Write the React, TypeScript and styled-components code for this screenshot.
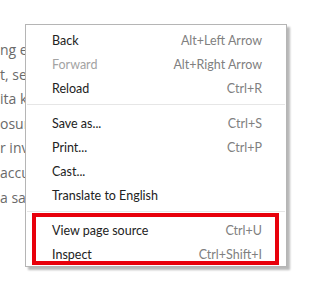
import styled, { createGlobalStyle } from "styled-components";

const GlobalStyle = createGlobalStyle`
    html, body {
        margin: 0;
        padding: 0;
        background: #ffffff;
    }
`;

const Page = styled.div`
    position: relative;
    width: 317px;
    height: 296px;
    overflow: hidden;
    background: #ffffff;
`;

const Article = styled.div`
    display: flex;
    flex-direction: column;
    padding-top: 38px;
    font-family: "Open Sans", sans-serif;
    font-size: 14px;
    line-height: 24.6px;
    color: #6a6a6a;
    white-space: nowrap;
`;

const Menu = styled.div`
    position: absolute;
    left: 25px;
    top: 24px;
    width: 260px;
    display: flex;
    flex-direction: column;
    padding: 3px 0 0;
    background: #ffffff;
    border: 1px solid #b5b5b5;
    box-shadow: 3px 3px 2px rgba(0, 0, 0, 0.28);
    font-family: Lato, sans-serif;
    font-size: 12.5px;
`;

const Row = styled.div<{ $disabled?: boolean }>`
    display: flex;
    align-items: center;
    justify-content: space-between;
    height: 24px;
    padding: 0 24px 0 26px;
    color: ${(p) => (p.$disabled ? "#a3a3a3" : "#222222")};
`;

const Shortcut = styled.span`
    color: #808080;
`;

const Separator = styled.div`
    height: 1px;
    margin: 4px 1px 6px 1px;
    background: #e6e6e6;
`;

const Highlight = styled.div`
    position: absolute;
    left: 32px;
    top: 213px;
    width: 239px;
    height: 44px;
    border: 4px solid #e8000b;
`;

const lines = ["ng el", "t, sed", "ita k", "osum", "r inv", "accu", "a san"];

type Item = { label: string; keys?: string; disabled?: boolean } | "sep";

const items: Item[] = [
    { label: "Back", keys: "Alt+Left Arrow" },
    { label: "Forward", keys: "Alt+Right Arrow", disabled: true },
    { label: "Reload", keys: "Ctrl+R" },
    "sep",
    { label: "Save as...", keys: "Ctrl+S" },
    { label: "Print...", keys: "Ctrl+P" },
    { label: "Cast..." },
    { label: "Translate to English" },
    "sep",
    { label: "View page source", keys: "Ctrl+U" },
    { label: "Inspect", keys: "Ctrl+Shift+I" },
];

const App = () => {
    return (
        <Page>
            <GlobalStyle />
            <Article>
                {lines.map((l) => (
                    <div key={l}>{l}</div>
                ))}
            </Article>
            <Menu>
                {items.map((item, i) =>
                    item === "sep" ? (
                        <Separator key={i} />
                    ) : (
                        <Row key={i} $disabled={item.disabled}>
                            <span>{item.label}</span>
                            {item.keys && <Shortcut>{item.keys}</Shortcut>}
                        </Row>
                    )
                )}
            </Menu>
            <Highlight />
        </Page>
    );
};

export default App;
